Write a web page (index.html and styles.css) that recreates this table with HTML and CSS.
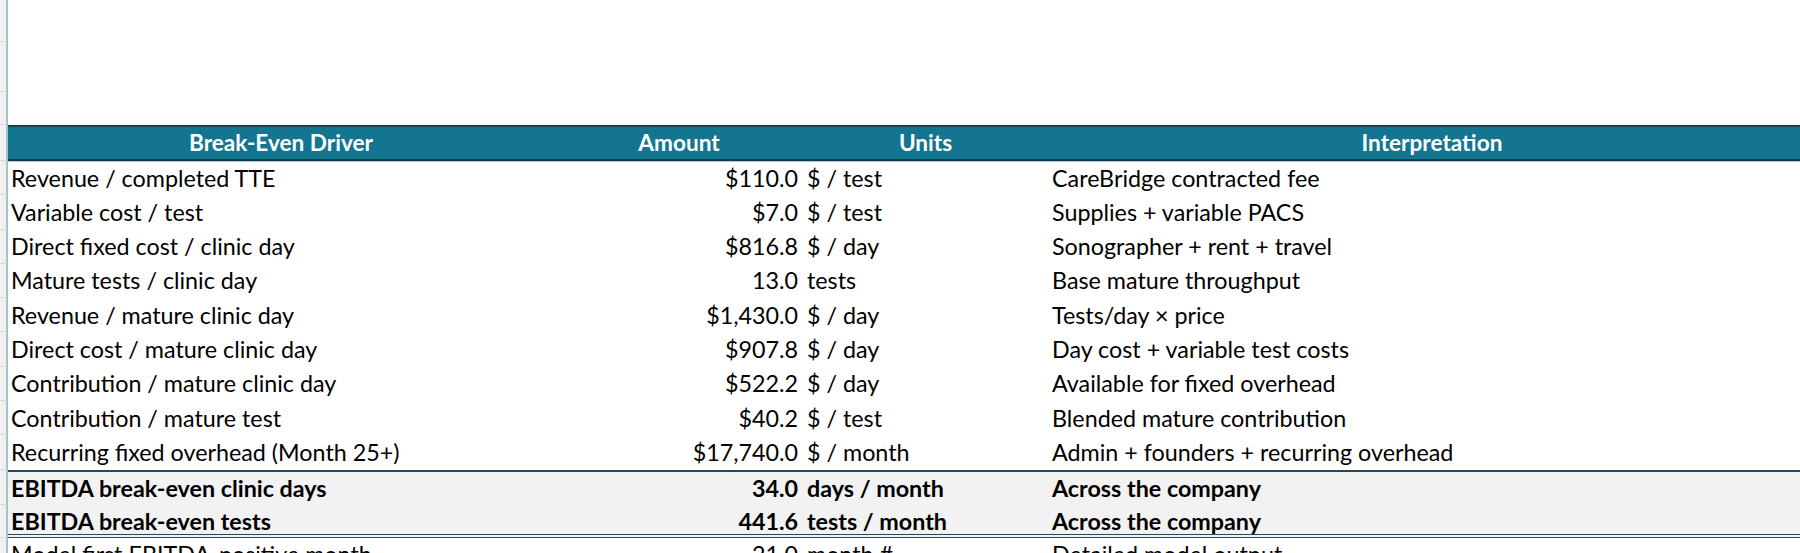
FILE: index.html
```html
<!DOCTYPE html>
<html>
<head>
<meta charset="utf-8">
<link rel="stylesheet" href="styles.css">
</head>
<body>
<div class="sheet">
  <div class="row spacer s1"><div class="gut"></div><div class="blank"></div></div>
  <div class="row spacer s2"><div class="gut"></div><div class="blank"></div></div>
  <div class="row spacer s3"><div class="gut"></div><div class="blank"></div></div>

  <div class="row head">
    <div class="gut"></div>
    <div class="c center">Break-Even Driver</div>
    <div class="c center">Amount</div>
    <div class="c center">Units</div>
    <div class="c center">Interpretation</div>
  </div>

  <div class="row"><div class="gut"></div><div class="c">Revenue / completed TTE</div><div class="c num">$110.0</div><div class="c">$ / test</div><div class="c interp">CareBridge contracted fee</div></div>
  <div class="row"><div class="gut"></div><div class="c">Variable cost / test</div><div class="c num">$7.0</div><div class="c">$ / test</div><div class="c interp">Supplies + variable PACS</div></div>
  <div class="row"><div class="gut"></div><div class="c">Direct fixed cost / clinic day</div><div class="c num">$816.8</div><div class="c">$ / day</div><div class="c interp">Sonographer + rent + travel</div></div>
  <div class="row"><div class="gut"></div><div class="c">Mature tests / clinic day</div><div class="c num">13.0</div><div class="c">tests</div><div class="c interp">Base mature throughput</div></div>
  <div class="row"><div class="gut"></div><div class="c">Revenue / mature clinic day</div><div class="c num">$1,430.0</div><div class="c">$ / day</div><div class="c interp">Tests/day × price</div></div>
  <div class="row"><div class="gut"></div><div class="c">Direct cost / mature clinic day</div><div class="c num">$907.8</div><div class="c">$ / day</div><div class="c interp">Day cost + variable test costs</div></div>
  <div class="row"><div class="gut"></div><div class="c">Contribution / mature clinic day</div><div class="c num">$522.2</div><div class="c">$ / day</div><div class="c interp">Available for fixed overhead</div></div>
  <div class="row"><div class="gut"></div><div class="c">Contribution / mature test</div><div class="c num">$40.2</div><div class="c">$ / test</div><div class="c interp">Blended mature contribution</div></div>
  <div class="row"><div class="gut"></div><div class="c">Recurring fixed overhead (Month 25+)</div><div class="c num">$17,740.0</div><div class="c">$ / month</div><div class="c interp">Admin + founders + recurring overhead</div></div>

  <div class="row total first"><div class="gut"></div><div class="c">EBITDA break-even clinic days</div><div class="c num">34.0</div><div class="c">days / month</div><div class="c interp">Across the company</div></div>
  <div class="row total last"><div class="gut"></div><div class="c">EBITDA break-even tests</div><div class="c num">441.6</div><div class="c">tests / month</div><div class="c interp">Across the company</div></div>

  <div class="row"><div class="gut"></div><div class="c">Model first EBITDA-positive month</div><div class="c num">21.0</div><div class="c">month #</div><div class="c interp">Detailed model output</div></div>
</div>
</body>
</html>
```

FILE: styles.css
```css
html, body {
  margin: 0;
  padding: 0;
  background: #ffffff;
  overflow: hidden;
}

body {
  font-family: "Lato", "Carlito", "Liberation Sans", sans-serif;
  font-size: 23.3px;
  color: #000000;
  width: 1800px;
  height: 553px;
}

.sheet {
  display: flex;
  flex-direction: column;
}

.row {
  display: grid;
  grid-template-columns: 8px 546px 250px 243px 770px;
  height: 34.3px;
  box-sizing: border-box;
}

.gut {
  background: #f1f1f1;
  border-bottom: 1px solid #d6d6d6;
  border-right: 2px solid #a4c3d1;
  box-sizing: content-box;
}

.row .gut {
  width: 6px;
}

.spacer .blank {
  grid-column: 2 / 6;
}

.spacer.s1 { height: 42px; }
.spacer.s2 { height: 50px; }
.spacer.s3 { height: 33px; }

.c {
  display: flex;
  align-items: center;
  padding: 0 3px;
  white-space: nowrap;
  overflow: hidden;
  line-height: 1;
}

.num {
  justify-content: flex-end;
  padding-right: 6px;
}

.c.interp {
  padding-left: 5px;
}

.center {
  justify-content: center;
}

.head {
  height: 36px;
}

.head .c {
  background: #13758f;
  color: #ffffff;
  font-weight: 700;
  font-size: 22.6px;
  border-top: 2px solid #1c3a4a;
  border-bottom: 2px solid #1c3a4a;
  box-shadow: 0 1px 0 #a8c6d3;
  padding-top: 1px;
}

.total .c {
  background: #f2f2f2;
  font-weight: 700;
}

.total.first {
  height: 35px;
}

.total.first .c {
  border-top: 2px solid #2b475a;
}

.total.last {
  height: 33px;
}

.total.last .c {
  border-bottom: 4px double #2b475a;
  padding-top: 4px;
}
```
